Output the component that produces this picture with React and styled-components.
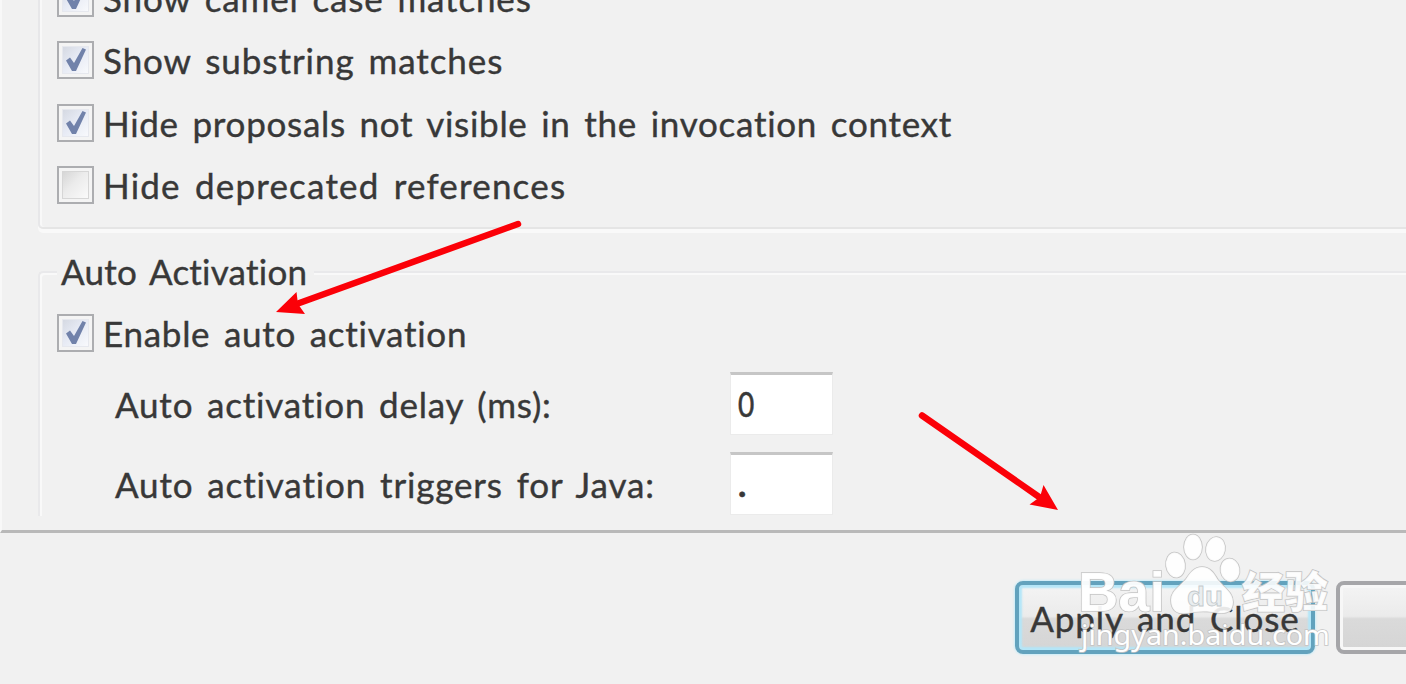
import React from "react";
import styled, { createGlobalStyle } from "styled-components";

const GlobalStyle = createGlobalStyle`
  * {
    box-sizing: border-box;
  }
  body {
    margin: 0;
    background: #f1f1f1;
    overflow: hidden;
  }
`;

const Page = styled.div`
  position: relative;
  display: flex;
  flex-direction: column;
  width: 1406px;
  height: 684px;
  overflow: hidden;
  background: #f1f1f1;
  color: #383838;
  font-family: "Lato", "Noto Sans", sans-serif;
  font-size: 35px;
  line-height: 38px;
  font-variant-ligatures: none;
`;

const Pane = styled.div`
  flex: none;
  height: 533px;
  padding-left: 36px;
  overflow: hidden;
  border-left: 2px solid #f8f8f8;
  border-bottom: 3px solid #b9b9b9;
`;

const ProposalGroup = styled.div`
  display: flex;
  flex-direction: column;
  justify-content: flex-end;
  gap: 24.5px;
  height: 229px;
  padding: 0 0 23px 17px;
  border-left: 2px solid #e7e7e9;
  border-bottom: 2px solid #e5e5e5;
  border-bottom-left-radius: 5px;
  box-shadow: inset 2px 0 #f8f8f8, 0 4px #f9f9f9;
`;

const ActivationGroup = styled.fieldset`
  min-width: 0;
  height: 263px;
  margin: 24px 0 0;
  padding: 23px 0 0 17px;
  border: 0 solid #e9e9eb;
  border-left-width: 2px;
  border-top-width: 2px;
  border-top-left-radius: 5px;
  box-shadow: inset 2px 2px #f9f9f9;
`;

const Legend = styled.legend`
  height: 38px;
  padding: 0 7px 0 4px;
  background: #f1f1f1;
`;

const Row = styled.div`
  display: flex;
  align-items: center;
  flex: none;
  height: 38px;
  gap: 9px;
`;

const Box = styled.span`
  display: flex;
  align-items: center;
  justify-content: center;
  flex: none;
  width: 37px;
  height: 38px;
  border: 2px solid #acadb0;
  background: #f4f4f4;
`;

const BoxFace = styled.span`
  display: flex;
  align-items: center;
  justify-content: center;
  width: 27px;
  height: 28px;
  border: 1px solid ${(props) => (props.$checked ? "#e6e8ee" : "#d6d6d6")};
  background: ${(props) =>
    props.$checked
      ? "linear-gradient(135deg, #d5d9e2 0%, #e6eaf4 45%, #f8f9fc 100%)"
      : "linear-gradient(135deg, #d6d6d6 0%, #ececec 45%, #fafafa 100%)"};
`;

const Label = styled.span`
  position: relative;
  top: ${(props) => props.$shift || 0}px;
  white-space: nowrap;
  -webkit-text-stroke: 0.4px #383838;
  letter-spacing: ${(props) => props.$track || 0}px;
  word-spacing: 4px;
`;

const FieldRow = styled.div`
  display: grid;
  grid-template-columns: 616px 102px;
  align-items: center;
  height: 63px;
  margin-top: ${(props) => props.$gap}px;
  padding-left: 58px;
`;

const Field = styled.div`
  display: flex;
  align-items: center;
  height: 63px;
  margin-left: -1px;
  padding-left: 7px;
  border: 1px solid #ebebeb;
  border-top: 3px solid #c6c6c6;
  background: #fff;
`;

const Value = styled.span`
  display: inline-block;
  margin-top: -3px;
  font-weight: ${(props) => (props.$bold ? 700 : 400)};
  transform: scaleX(${(props) => props.$stretch || 1});
  transform-origin: left;
  -webkit-text-stroke: 0.6px #383838;
`;

const Footer = styled.div`
  display: flex;
  flex: 1;
  gap: 21px;
  padding: 48px 0 0 1015px;
`;

const ActionButton = styled.div`
  display: flex;
  align-items: center;
  justify-content: center;
  flex: none;
  width: 300px;
  height: 73px;
  border: 4px solid ${(props) => (props.$primary ? "#62a2bd" : "#a6a6a9")};
  border-radius: 8px;
  background: linear-gradient(#f4f4f4 0%, #ebebeb 48%, #dadada 52%, #d5d5d5 100%);
  box-shadow: ${(props) =>
    props.$primary
      ? "inset 0 0 2px 3px #b4e6f8, 0 0 2px 1px #c9ecf8"
      : "inset 0 0 0 3px #f7f7f7"};
`;

const Overlay = styled.svg`
  position: absolute;
  left: 0;
  top: 0;
`;

const Check = () => (
  <svg width="25" height="26" viewBox="0 0 25 26">
    <path d="M3 13.500L7 10.500L11 16L19.500 1L23 2.500L13 24H9Z" fill="#7182aa" />
  </svg>
);

const CheckRow = ({ checked, track, children }) => (
  <Row>
    <Box>
      <BoxFace $checked={checked}>{checked && <Check />}</BoxFace>
    </Box>
    <Label $track={track}>{children}</Label>
  </Row>
);

const Arrows = () => (
  <Overlay width="1406" height="684">
    <g stroke="#fb0008" strokeWidth="6.5" strokeLinecap="round">
      <path d="M518 224L298 303.500" />
      <path d="M922 415.500L1042 499" />
    </g>
    <g fill="#fb0008">
      <path d="M276 312L296.500 292L298 304L305 314Z" />
      <path d="M1058 510L1043.500 485L1040 497L1029.500 504.500Z" />
    </g>
  </Overlay>
);

const Watermark = () => (
  <Overlay width="1406" height="684">
    <g fill="#fff" fillOpacity="0.88" stroke="#c4c4c4" strokeWidth="1.6" paintOrder="stroke">
      <ellipse cx="1175.500" cy="565" rx="9.500" ry="12.500" transform="rotate(-8 1175.500 565)" />
      <ellipse cx="1193" cy="547" rx="9" ry="12.500" />
      <ellipse cx="1215.500" cy="549" rx="9.500" ry="12" transform="rotate(10 1215.500 549)" />
      <ellipse cx="1230" cy="570" rx="9.500" ry="11.500" transform="rotate(-10 1230 570)" />
      <path d="M1202 567C1210 567 1214 573 1218 580C1224 588 1233 592 1233 602C1233 611 1227 614 1219 613C1208 611 1198 611 1188 613C1178 615 1171 611 1171 600C1171 590 1180 587 1186 579C1190 573 1194 567 1202 567Z" />
      <text x="1078" y="611" fontFamily="Liberation Sans, sans-serif" fontWeight="700" fontSize="56" textLength="87" lengthAdjust="spacingAndGlyphs" fillOpacity="0.94">Bai</text>
      <text x="1242" y="608" fontFamily="Noto Sans CJK SC, sans-serif" fontWeight="900" fontSize="43" textLength="86">经验</text>
      <text x="1081" y="645" fontFamily="Noto Sans, sans-serif" fontSize="28" textLength="249" lengthAdjust="spacingAndGlyphs" fillOpacity="1">jingyan.baidu.com</text>
    </g>
    <text x="1187" y="606" fontFamily="Liberation Sans, sans-serif" fontWeight="700" fontSize="28" textLength="36" lengthAdjust="spacingAndGlyphs" fill="#e9edef" stroke="#c3c9cc" strokeWidth="0.8">du</text>
  </Overlay>
);

const App = () => {
  return (
    <>
      <GlobalStyle />
      <Page>
        <Pane>
          <ProposalGroup>
            <CheckRow checked track={0.85}>Show camel case matches</CheckRow>
            <CheckRow checked track={0.94}>Show substring matches</CheckRow>
            <CheckRow checked track={0.72}>Hide proposals not visible in the invocation context</CheckRow>
            <CheckRow track={1.2}>Hide deprecated references</CheckRow>
          </ProposalGroup>
          <ActivationGroup>
            <Legend>
              <Label $shift={-1} $track={0.22}>Auto Activation</Label>
            </Legend>
            <CheckRow checked track={0.72}>Enable auto activation</CheckRow>
            <FieldRow $gap={20}>
              <Label $track={0.8}>Auto activation delay (ms):</Label>
              <Field>
                <Value $stretch={0.8}>0</Value>
              </Field>
            </FieldRow>
            <FieldRow $gap={17}>
              <Label $track={0.86}>Auto activation triggers for Java:</Label>
              <Field>
                <Value $bold>.</Value>
              </Field>
            </FieldRow>
          </ActivationGroup>
        </Pane>
        <Footer>
          <ActionButton $primary>
            <Label $track={0.9}>Apply and Close</Label>
          </ActionButton>
          <ActionButton />
        </Footer>
        <Arrows />
        <Watermark />
      </Page>
    </>
  );
};

export default App;
